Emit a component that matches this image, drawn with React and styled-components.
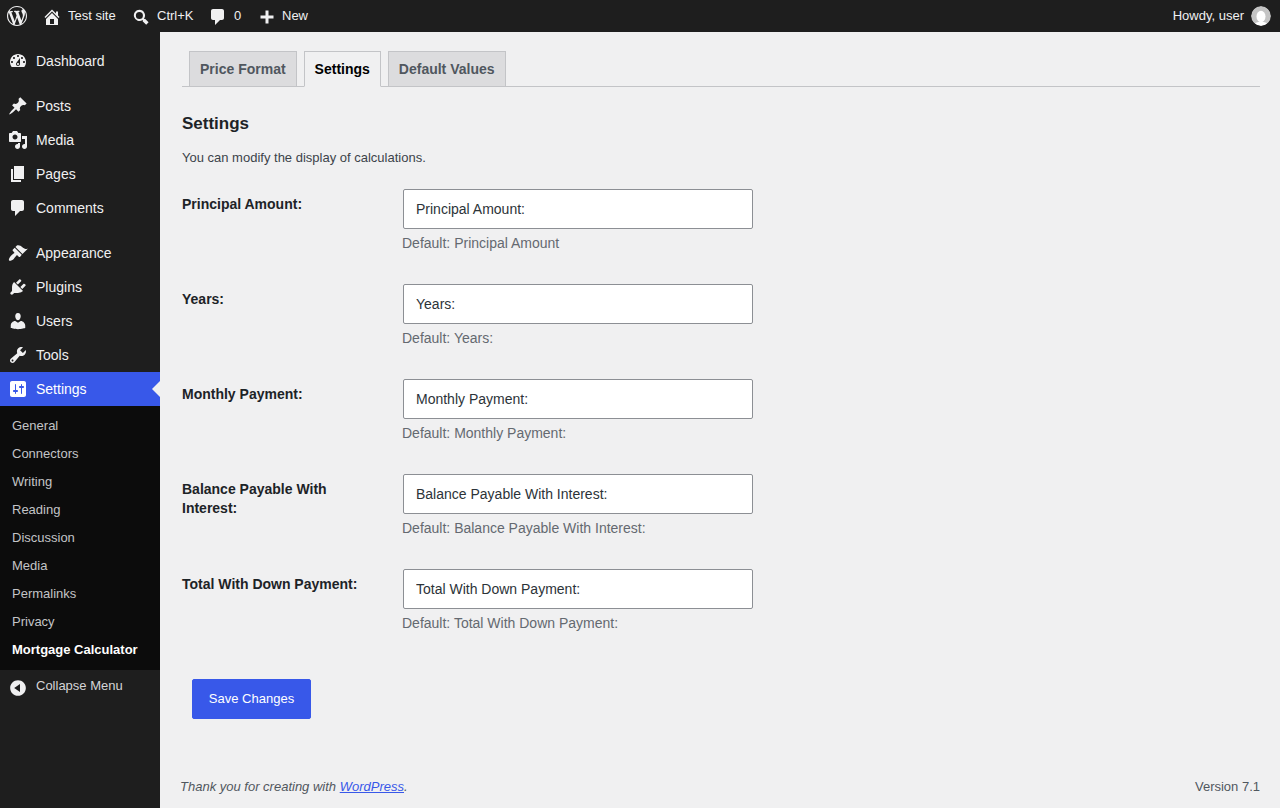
import React from 'react';
import styled, { createGlobalStyle } from 'styled-components';

const paths = {
	logo: 'M20 10c0-5.51-4.49-10-10-10C4.48 0 0 4.49 0 10c0 5.52 4.48 10 10 10 5.51 0 10-4.48 10-10zM7.78 15.37L4.37 6.22c.55-.02 1.17-.08 1.17-.08.5-.06.44-1.13-.06-1.11 0 0-1.45.11-2.37.11-.18 0-.37 0-.58-.01C4.12 2.69 6.87 1.11 10 1.11c2.33 0 4.45.87 6.03 2.34-.68-.11-1.65.39-1.65 1.58 0 .74.45 1.37.9 2.1.35.61.55 1.36.55 2.46 0 1.49-1.4 5-1.4 5l-3.03-8.37c.54-.02.82-.17.82-.17.5-.05.44-1.25-.06-1.22 0 0-1.44.12-2.38.12-.87 0-2.33-.12-2.33-.12-.5-.03-.56 1.2-.06 1.22l.92.08 1.26 3.41zM17.41 10c.24-.64.74-1.87.43-4.25.7 1.29 1.05 2.71 1.05 4.25 0 3.29-1.73 6.24-4.4 7.78.97-2.59 1.94-5.2 2.92-7.78zM6.1 18.09C3.12 16.65 1.11 13.53 1.11 10c0-1.3.23-2.48.72-3.59C3.25 10.3 4.67 14.2 6.1 18.09zm4.03-6.63l2.58 6.98c-.86.29-1.76.45-2.71.45-.79 0-1.57-.11-2.29-.33.81-2.38 1.62-4.74 2.42-7.1z',
	home: 'M16 8.5l1.53 1.53-1.06 1.06L10 4.62l-6.47 6.47-1.06-1.06L10 2.5l4 4v-2h2v4zm-6-2.46l6 5.99V18H4v-5.97zM12 17v-5H8v5h4z',
	search: 'M8 1a7 7 0 0 1 5.600 11.200l.4.400 1-.4 4.500 4.500-3 3-4.500-4.500.4-1-.4-.4A7 7 0 1 1 8 1zm0 2.600a4.400 4.400 0 1 0 0 8.800 4.400 4.400 0 0 0 0-8.800z',
	comment: 'M5 2h9c1.100 0 2 .9 2 2v7c0 1.100-.9 2-2 2h-2l-5 5v-5H5c-1.100 0-2-.9-2-2V4c0-1.100.9-2 2-2z',
	plus: 'M8.500 3.500h3v5h5v3h-5v5h-3v-5h-5v-3h5z',
	dashboard: 'M3.76 16h12.48c1.1-1.37 1.76-3.11 1.76-5 0-4.42-3.58-8-8-8s-8 3.58-8 8c0 1.89.66 3.63 1.76 5zM10 4c.55 0 1 .45 1 1s-.45 1-1 1-1-.45-1-1 .45-1 1-1zM6 6c.55 0 1 .45 1 1s-.45 1-1 1-1-.45-1-1 .45-1 1-1zm8 0c.55 0 1 .45 1 1s-.45 1-1 1-1-.45-1-1 .45-1 1-1zm-5.37 5.55L12 7v6c0 1.1-.9 2-2 2s-2-.9-2-2c0-.57.24-1.08.63-1.45zM4 10c.55 0 1 .45 1 1s-.45 1-1 1-1-.45-1-1 .45-1 1-1zm12 0c.55 0 1 .45 1 1s-.45 1-1 1-1-.45-1-1 .45-1 1-1zm-5 3c0-.55-.45-1-1-1s-1 .45-1 1 .45 1 1 1 1-.45 1-1z',
	posts: 'M10.44 3.02l1.82-1.82 6.36 6.35-1.83 1.82c-1.05-.68-2.48-.57-3.41.36l-.75.75c-.92.93-1.04 2.35-.35 3.41l-1.83 1.82-2.41-2.41-2.8 2.79c-.42.42-3.38 2.71-3.8 2.29s1.86-3.39 2.28-3.81l2.79-2.79L4.1 9.36l1.83-1.82c1.05.69 2.48.57 3.4-.36l.75-.75c.93-.92 1.05-2.35.36-3.41z',
	media: 'M13 11V4c0-.55-.45-1-1-1h-1.67L9 1H5L3.67 3H2c-.55 0-1 .45-1 1v7c0 .55.45 1 1 1h10c.55 0 1-.45 1-1zM7 4.5c1.38 0 2.5 1.12 2.5 2.5S8.38 9.5 7 9.5 4.5 8.38 4.5 7 5.62 4.5 7 4.5zM14 6h5v10.5c0 1.38-1.12 2.5-2.5 2.5S14 17.88 14 16.5s1.12-2.5 2.5-2.5c.17 0 .34.02.5.05V9h-3V6zm-4 8.05V13h2v3.5c0 1.38-1.12 2.5-2.5 2.5S7 17.88 7 16.5 8.12 14 9.5 14c.17 0 .34.02.5.05z',
	pages: 'M6 15V2h10v13H6zm-1 1h8v2H3V5h2v11z',
	appearance: 'M14.48 11.06L7.41 3.99l1.5-1.5c.5-.56 2.3-.47 3.51.32 1.21.8 1.43 1.28 2.91 2.1 1.18.64 2.45 1.26 4.45.85zM13.77 11.77L6.7 4.7 4.93 6.47c-.39.39-.39 1.02 0 1.41l1.06 1.06c.39.39.39 1.03 0 1.42-.6.6-1.43 1.11-2.21 1.69-.35.26-.7.53-1.01.84-1.34 1.34-2.37 3.95-1.67 4.65.71.7 3.31-.32 4.65-1.66.31-.31.58-.66.85-1.02.57-.78 1.08-1.6 1.69-2.21.39-.39 1.02-.39 1.41 0l1.06 1.06c.39.39 1.02.39 1.41 0z',
	plugins: 'M13.11 4.36L9.87 7.6 8 5.73l3.24-3.24c.35-.34 1.05-.2 1.56.32.52.51.66 1.21.31 1.55zm-8 1.77l.91-1.12 9.01 9.01-1.19.84c-.71.71-2.63 1.16-3.82 1.16H6.14L4.9 17.26c-.59.59-1.54.59-2.12 0-.59-.58-.59-1.53 0-2.12l1.24-1.24v-3.88c0-1.13.4-3.19 1.09-3.89zm7.26 3.97l3.24-3.24c.34-.35 1.04-.21 1.55.31.52.51.66 1.21.31 1.55l-3.24 3.25z',
	users: 'M10 9.25c-2.27 0-2.73-3.44-2.73-3.44C7 4.02 7.82 2 9.97 2c2.16 0 2.98 2.02 2.71 3.81 0 0-.41 3.44-2.68 3.44zm0 2.57L12.72 10c2.39 0 4.52 2.33 4.52 4.53v2.49s-3.65 1.13-7.24 1.13c-3.65 0-7.24-1.13-7.24-1.13v-2.49c0-2.25 1.94-4.48 4.47-4.48z',
	tools: 'M16.68 9.77c-1.34 1.34-3.3 1.67-4.95.99l-5.41 6.52c-.99.99-2.59.99-3.58 0s-.99-2.59 0-3.57l6.52-5.42c-.68-1.65-.35-3.61.99-4.95 1.28-1.28 3.12-1.62 4.72-1.06l-2.89 2.89 2.82 2.82 2.86-2.87c.53 1.58.18 3.39-1.08 4.65zM3.81 16.21c.4.39 1.04.39 1.43 0 .4-.4.4-1.04 0-1.43-.39-.4-1.03-.4-1.43 0-.39.39-.39 1.03 0 1.43z',
	settings: 'M18 16V4c0-1.1-.9-2-2-2H4c-1.1 0-2 .9-2 2v12c0 1.1.9 2 2 2h12c1.1 0 2-.9 2-2zM8 11h1c.55 0 1 .45 1 1s-.45 1-1 1H8v1.5c0 .28-.22.5-.5.5s-.5-.22-.5-.5V13H6c-.55 0-1-.45-1-1s.45-1 1-1h1V5.5c0-.28.22-.5.5-.5s.5.22.5.5V11zm5-2h-1c-.55 0-1-.45-1-1s.45-1 1-1h1V5.5c0-.28.22-.5.5-.5s.5.22.5.5V7h1c.55 0 1 .45 1 1s-.45 1-1 1h-1v5.5c0 .28-.22.5-.5.5s-.5-.22-.5-.5V9z',
	collapse: 'M10 2.16c4.33 0 7.84 3.51 7.84 7.84s-3.51 7.84-7.84 7.84S2.16 14.33 2.16 10 5.67 2.16 10 2.16zm2 11.72V6.12L6.18 9.97z',
};

const menuGroups = [
	[{ icon: 'dashboard', label: 'Dashboard' }],
	[
		{ icon: 'posts', label: 'Posts' },
		{ icon: 'media', label: 'Media' },
		{ icon: 'pages', label: 'Pages' },
		{ icon: 'comment', label: 'Comments' },
	],
	[
		{ icon: 'appearance', label: 'Appearance' },
		{ icon: 'plugins', label: 'Plugins' },
		{ icon: 'users', label: 'Users' },
		{ icon: 'tools', label: 'Tools' },
		{ icon: 'settings', label: 'Settings', active: true },
	],
];

const subItems = ['General', 'Connectors', 'Writing', 'Reading', 'Discussion', 'Media', 'Permalinks', 'Privacy', 'Mortgage Calculator'];

const fields = [
	{ label: 'Principal Amount:', value: 'Principal Amount:', hint: 'Default: Principal Amount' },
	{ label: 'Years:', value: 'Years:', hint: 'Default: Years:' },
	{ label: 'Monthly Payment:', value: 'Monthly Payment:', hint: 'Default: Monthly Payment:' },
	{ label: 'Balance Payable With Interest:', value: 'Balance Payable With Interest:', hint: 'Default: Balance Payable With Interest:' },
	{ label: 'Total With Down Payment:', value: 'Total With Down Payment:', hint: 'Default: Total With Down Payment:' },
];

const Icon = ({ name, size = 20 }) => (
	<svg width={size} height={size} viewBox="0 0 20 20" fill="currentColor" aria-hidden="true">
		<path fillRule="evenodd" d={paths[name]} />
	</svg>
);

const App = () => {
	return (
		<>
			<GlobalStyle />
			<AdminBar>
				<BarGroup>
					<LogoLink><Icon name="logo" /></LogoLink>
					<BarItem $width={91} $gap={6}><Icon name="home" />Test site</BarItem>
					<BarItem $width={75} $gap={8}><Icon name="search" size={16} />Ctrl+K</BarItem>
					<BarItem $width={49} $gap={6}><Icon name="comment" />0</BarItem>
					<BarItem $width={70} $gap={5}><Icon name="plus" />New</BarItem>
				</BarGroup>
				<Howdy>
					Howdy, user
					<Avatar>
						<svg width="20" height="20" viewBox="0 0 20 20" aria-hidden="true">
							<circle cx="10" cy="10" r="10" fill="#c4c4c4" />
							<ellipse cx="10" cy="10.500" rx="4.500" ry="5.800" fill="#fff" />
							<path d="M4 17.500c2-2.500 10-2.500 12 0a10 10 0 0 1-12 0z" fill="#fff" />
						</svg>
					</Avatar>
				</Howdy>
			</AdminBar>
			<Shell>
				<Sidebar>
					{menuGroups.map((group, i) => (
						<MenuGroup key={i}>
							{group.map((item) => (
								<MenuItem key={item.label} $active={item.active}>
									<Icon name={item.icon} />
									{item.label}
								</MenuItem>
							))}
						</MenuGroup>
					))}
					<SubMenu>
						{subItems.map((item, i) => (
							<SubItem key={item} $current={i === subItems.length - 1}>{item}</SubItem>
						))}
					</SubMenu>
					<Collapse><Icon name="collapse" />Collapse Menu</Collapse>
				</Sidebar>
				<Main>
					<Content>
						<Tabs>
							<Tab>Price Format</Tab>
							<Tab $active>Settings</Tab>
							<Tab>Default Values</Tab>
						</Tabs>
						<Heading>Settings</Heading>
						<Intro>You can modify the display of calculations.</Intro>
						{fields.map((field) => (
							<FieldRow key={field.label}>
								<FieldLabel>{field.label}</FieldLabel>
								<div>
									<TextInput defaultValue={field.value} />
									<Hint>{field.hint}</Hint>
								</div>
							</FieldRow>
						))}
						<SaveButton>Save Changes</SaveButton>
					</Content>
					<Footer>
						<Thanks>Thank you for creating with <a href="#wp">WordPress</a>.</Thanks>
						<span>Version 7.1</span>
					</Footer>
				</Main>
			</Shell>
		</>
	);
};

export default App;

const GlobalStyle = createGlobalStyle`
	html, body {
		margin: 0;
		height: 100%;
		overflow: hidden;
		background: #f0f0f1;
		font-family: 'Liberation Sans', Arial, sans-serif;
		font-size: 13px;
		color: #3c434a;
	}
	* {
		box-sizing: border-box;
	}
`;

const AdminBar = styled.header`
	height: 32px;
	background: #1e1e1e;
	color: #f0f0f1;
	display: flex;
	align-items: center;
	justify-content: space-between;
	padding: 0 9px 0 7px;
	line-height: 32px;
`;

const BarGroup = styled.div`
	display: flex;
	align-items: center;
`;

const LogoLink = styled.span`
	display: flex;
	width: 35px;
`;

const BarItem = styled.span`
	display: flex;
	align-items: center;
	gap: ${(props) => props.$gap}px;
	width: ${(props) => props.$width}px;

	svg {
		margin-top: 1px;
	}
`;

const Howdy = styled.div`
	display: flex;
	align-items: center;
	gap: 7px;
`;

const Avatar = styled.span`
	display: flex;
	width: 20px;
	height: 20px;
	border-radius: 50%;
	overflow: hidden;
`;

const Shell = styled.div`
	display: flex;
	height: 776px;
`;

const Sidebar = styled.nav`
	width: 160px;
	flex-shrink: 0;
	background: #1e1e1e;
	padding-top: 12px;
	color: #f0f0f1;
`;

const MenuGroup = styled.div`
	margin-bottom: 11px;

	&:nth-child(3) {
		margin-bottom: 0;
	}
`;

const MenuItem = styled.div`
	position: relative;
	height: 34px;
	display: flex;
	align-items: center;
	gap: 8px;
	padding-left: 8px;
	font-size: 14px;
	background: ${(props) => (props.$active ? '#3858e9' : 'transparent')};
	color: ${(props) => (props.$active ? '#fff' : '#f0f0f1')};

	${(props) =>
		props.$active &&
		`&::after {
			content: '';
			position: absolute;
			right: 0;
			top: 50%;
			margin-top: -8px;
			border: 8px solid transparent;
			border-right-color: #f0f0f1;
			border-left-width: 0;
		}`}
`;

const SubMenu = styled.div`
	background: #0c0c0c;
	padding: 6px 0;
`;

const SubItem = styled.div`
	height: 28px;
	line-height: 28px;
	padding-left: 12px;
	font-size: 13px;
	font-weight: ${(props) => (props.$current ? 700 : 400)};
	color: ${(props) => (props.$current ? '#fff' : '#c3c4c7')};
`;

const Collapse = styled.div`
	display: flex;
	align-items: flex-start;
	gap: 8px;
	padding: 7px 0 0 8px;
	font-size: 13px;
	line-height: 18px;
	color: #d5d5d7;

	svg {
		margin-top: 1px;
		color: #f0f0f1;
	}
`;

const Main = styled.main`
	flex: 1;
	display: flex;
	flex-direction: column;
	min-width: 0;
`;

const Content = styled.div`
	flex: 1;
	padding: 19px 20px 0 22px;
`;

const Tabs = styled.div`
	display: flex;
	gap: 7px;
	padding-left: 7px;
	height: 36px;
	border-bottom: 1px solid #c3c4c7;
`;

const Tab = styled.div`
	height: 36px;
	padding: 0 10px;
	line-height: 34px;
	font-size: 14px;
	font-weight: 700;
	border: 1px solid #c3c4c7;
	background: ${(props) => (props.$active ? '#f0f0f1' : '#dcdcde')};
	color: ${(props) => (props.$active ? '#000' : '#50575e')};
	border-bottom-color: ${(props) => (props.$active ? '#f0f0f1' : '#c3c4c7')};
`;

const Heading = styled.h2`
	margin: 25px 0 0;
	font-size: 17px;
	line-height: 24px;
	font-weight: 700;
	color: #1d2327;
`;

const Intro = styled.p`
	margin: 13px 0 22px;
	font-size: 13px;
	line-height: 18px;
	color: #3c434a;
`;

const FieldRow = styled.div`
	display: grid;
	grid-template-columns: 220px 1fr;
	height: 95px;
`;

const FieldLabel = styled.label`
	padding: 6px 20px 0 0;
	font-size: 14px;
	line-height: 19px;
	font-weight: 700;
	color: #1d2327;
`;

const TextInput = styled.input`
	display: block;
	width: 350px;
	height: 40px;
	margin-left: 1px;
	padding: 0 12px;
	border: 1px solid #8c8f94;
	border-radius: 2px;
	background: #fff;
	font-family: inherit;
	font-size: 14px;
	color: #2c3338;
	outline: none;
`;

const Hint = styled.p`
	margin: 5px 0 0;
	font-size: 14px;
	line-height: 19px;
	color: #646970;
`;

const SaveButton = styled.button`
	display: block;
	width: 119px;
	height: 40px;
	margin: 15px 0 0 10px;
	padding: 0 0 2px;
	border: 1px solid #3858e9;
	border-radius: 2px;
	background: #3858e9;
	color: #fff;
	font-family: inherit;
	font-size: 13px;
`;

const Footer = styled.footer`
	display: flex;
	justify-content: space-between;
	padding: 0 20px 12px;
	line-height: 18px;
	font-size: 13px;
	color: #50575e;
`;

const Thanks = styled.span`
	font-style: italic;

	a {
		color: #3858e9;
	}
`;
